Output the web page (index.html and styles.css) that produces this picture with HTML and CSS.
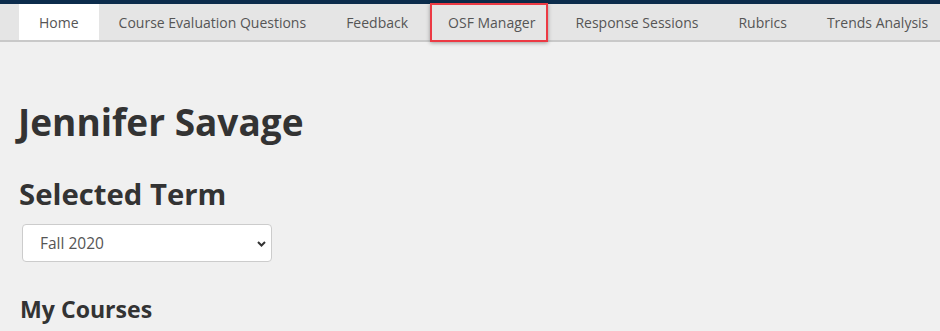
FILE: index.html
```html
<!DOCTYPE html>
<html lang="en">
<head>
  <meta charset="UTF-8">
  <meta name="viewport" content="width=device-width, initial-scale=1.0">
  <title>Jennifer Savage - Home</title>
  <link rel="stylesheet" href="styles.css">
</head>
<body>
  <!-- Barra superior -->
  <div class="topbar"></div>

  <!-- Menu de navegação -->
  <nav class="nav">
    <a class="nav-item active" href="#">Home</a>
    <a class="nav-item" href="#">Course Evaluation Questions</a>
    <a class="nav-item" href="#">Feedback</a>
    <a class="nav-item marked" href="#">OSF Manager</a>
    <a class="nav-item" href="#">Response Sessions</a>
    <a class="nav-item" href="#">Rubrics</a>
    <a class="nav-item" href="#">Trends Analysis</a>
  </nav>

  <main class="content">
    <h1>Jennifer Savage</h1>

    <h2>Selected Term</h2>
    <div class="select-wrap">
      <select class="term-select">
        <option>Fall 2020</option>
        <option>Spring 2020</option>
      </select>
      <svg class="chevron" width="9" height="6" viewBox="0 0 9 6">
        <path d="M1 1 L4.5 4.5 L8 1" fill="none" stroke="#333" stroke-width="2"/>
      </svg>
    </div>

    <h3>My Courses</h3>
  </main>
</body>
</html>
```

FILE: styles.css
```css
/* Estilos globais */
body {
  font-family: 'Open Sans', sans-serif;
  margin: 0;
  padding: 0;
  background: #f0f0f0;
  color: #333;
}

.topbar {
  height: 4px;
  background: #0c2c4c;
}

/* Menu */
.nav {
  display: flex;
  padding-left: 19px;
  background: #e5e5e5;
  border-bottom: 2px solid #c9c9c9;
  height: 36px;
}

.nav-item {
  display: flex;
  align-items: center;
  padding: 0 20px;
  font-size: 14px;
  color: #555;
  text-decoration: none;
  white-space: nowrap;
}

.nav-item.active {
  background: #fff;
}

.nav-item.marked {
  position: relative;
}

/* Destaque vermelho (anotação) */
.nav-item.marked::after {
  content: "";
  position: absolute;
  left: 2px;
  right: 7px;
  top: -1px;
  bottom: -2px;
  border: 2px solid #ec3a44;
  box-shadow: 0 1px 4px rgba(0, 0, 0, 0.35);
}

/* Conteúdo */
.content {
  padding: 52px 18px 0;
}

h1 {
  margin: 0;
  font-size: 37px;
  font-weight: bold;
  line-height: 56px;
}

h2 {
  margin: 24px 0 0 1px;
  font-size: 29.3px;
  font-weight: bold;
  line-height: 40px;
}

.select-wrap {
  position: relative;
  width: 250px;
  margin: 10px 0 0 4px;
}

.term-select {
  appearance: none;
  width: 100%;
  height: 38px;
  padding: 0 17px;
  font-family: 'Open Sans', sans-serif;
  font-size: 15.5px;
  color: #555;
  background: #fff;
  border: 1px solid #ccc;
  border-radius: 4px;
}

.chevron {
  position: absolute;
  right: 6px;
  top: 17px;
}

h3 {
  margin: 29px 0 0 2px;
  font-size: 23.1px;
  font-weight: bold;
  line-height: 36px;
}
```
